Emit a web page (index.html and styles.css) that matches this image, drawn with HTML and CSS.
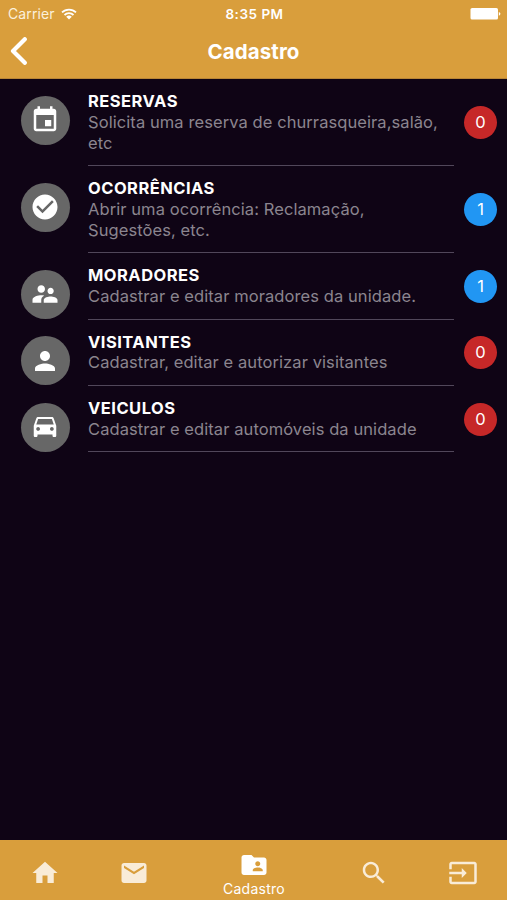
FILE: index.html
```html
<!DOCTYPE html>
<html lang="pt-BR">

<head>
    <meta charset="UTF-8">
    <meta name="viewport" content="width=device-width, initial-scale=1.0">
    <title>Cadastro</title>
    <link rel="stylesheet" href="styles.css">
</head>

<body>
    <div class="app">
        <header class="header">
            <div class="status-bar">
                <div class="carrier">
                    <span class="carrier-name">Carrier</span>
                    <svg class="wifi" viewBox="0 0 16 12">
                        <path d="M1 4.4a10 10 0 0 1 14 0M3.5 7a6.4 6.4 0 0 1 9 0" fill="none" stroke="currentColor" stroke-width="1.8" />
                        <path d="M8 11.6L5.2 8.8a4 4 0 0 1 5.6 0z" fill="currentColor" />
                    </svg>
                </div>
                <div class="time">8:35 PM</div>
                <svg class="battery" viewBox="0 0 31 12">
                    <rect x="0.5" y="0" width="27.5" height="11.6" rx="1.6" />
                    <path d="M28.8 3.9q1.6 0.4 1.6 1.9t-1.6 1.9z" />
                </svg>
            </div>
            <div class="nav-bar">
                <svg class="back" viewBox="0 0 18 28">
                    <path d="M14.8 2.2L3 14l11.8 11.8" fill="none" stroke="currentColor" stroke-width="4.2" stroke-linejoin="round" stroke-linecap="round" />
                </svg>
                <h1>Cadastro</h1>
            </div>
        </header>

        <main class="list">
            <div class="item">
                <div class="avatar">
                    <svg viewBox="0 0 24 24"><path d="M17 12h-5v5h5v-5zM16 1v2H8V1H6v2H5c-1.11 0-1.99.9-1.99 2L3 19c0 1.1.89 2 2 2h14c1.1 0 2-.9 2-2V5c0-1.1-.9-2-2-2h-1V1h-2zm3 18H5V8h14v11z" /></svg>
                </div>
                <div class="info">
                    <h2>RESERVAS</h2>
                    <p>Solicita uma reserva de churrasqueira,salão,<br>etc</p>
                </div>
                <div class="badge red">0</div>
            </div>
            <div class="item">
                <div class="avatar">
                    <svg viewBox="0 0 24 24"><path d="M12 2C6.48 2 2 6.48 2 12s4.48 10 10 10 10-4.48 10-10S17.52 2 12 2zm-2 15l-5-5 1.41-1.41L10 14.17l7.59-7.59L19 8l-9 9z" /></svg>
                </div>
                <div class="info">
                    <h2>OCORRÊNCIAS</h2>
                    <p>Abrir uma ocorrência: Reclamação,<br>Sugestões, etc.</p>
                </div>
                <div class="badge blue">1</div>
            </div>
            <div class="item">
                <div class="avatar">
                    <svg viewBox="0 0 24 24"><path d="M16.5 12c1.38 0 2.49-1.12 2.49-2.5S17.88 7 16.5 7C15.12 7 14 8.12 14 9.5s1.12 2.5 2.5 2.5zM9 11c1.66 0 2.99-1.34 2.99-3S10.66 5 9 5C7.34 5 6 6.34 6 8s1.34 3 3 3zm7.5 3c-1.83 0-5.5.92-5.5 2.75V19h11v-2.25c0-1.83-3.67-2.75-5.5-2.75zM9 13c-2.33 0-7 1.17-7 3.5V19h7v-2.25c0-.85.33-2.34 2.37-3.47C10.5 13.1 9.66 13 9 13z" /></svg>
                </div>
                <div class="info">
                    <h2>MORADORES</h2>
                    <p>Cadastrar e editar moradores da unidade.</p>
                </div>
                <div class="badge blue">1</div>
            </div>
            <div class="item">
                <div class="avatar">
                    <svg viewBox="0 0 24 24"><path d="M12 12c2.21 0 4-1.79 4-4s-1.79-4-4-4-4 1.79-4 4 1.79 4 4 4zm0 2c-2.67 0-8 1.34-8 4v2h16v-2c0-2.66-5.33-4-8-4z" /></svg>
                </div>
                <div class="info">
                    <h2>VISITANTES</h2>
                    <p>Cadastrar, editar e autorizar visitantes</p>
                </div>
                <div class="badge red">0</div>
            </div>
            <div class="item">
                <div class="avatar">
                    <svg viewBox="0 0 24 24"><path d="M18.92 5.01C18.72 4.42 18.16 4 17.5 4h-11c-.66 0-1.21.42-1.42 1.01L3 11v8c0 .55.45 1 1 1h1c.55 0 1-.45 1-1v-1h12v1c0 .55.45 1 1 1h1c.55 0 1-.45 1-1v-8l-2.08-5.99zM6.5 15c-.83 0-1.5-.67-1.5-1.5S5.67 12 6.5 12s1.5.67 1.5 1.5S7.33 15 6.5 15zm11 0c-.83 0-1.5-.67-1.5-1.5s.67-1.5 1.5-1.5 1.5.67 1.5 1.5-.67 1.5-1.5 1.5zM5 10l1.5-4.5h11L19 10H5z" /></svg>
                </div>
                <div class="info">
                    <h2>VEICULOS</h2>
                    <p>Cadastrar e editar automóveis da unidade</p>
                </div>
                <div class="badge red">0</div>
            </div>
        </main>

        <nav class="tabs">
            <div class="tab">
                <svg viewBox="0 0 24 24"><path d="M10 20v-6h4v6h5v-8h3L12 3 2 12h3v8z" /></svg>
            </div>
            <div class="tab">
                <svg viewBox="0 0 24 24"><path d="M20 4H4c-1.1 0-1.99.9-1.99 2L2 18c0 1.1.9 2 2 2h16c1.1 0 2-.9 2-2V6c0-1.1-.9-2-2-2zm0 4l-8 5-8-5V6l8 5 8-5v2z" /></svg>
            </div>
            <div class="tab active">
                <svg viewBox="0 0 24 24"><path d="M20 6h-8l-2-2H4c-1.1 0-1.99.9-1.99 2L2 18c0 1.1.9 2 2 2h16c1.1 0 2-.9 2-2V8c0-1.1-.9-2-2-2zm-5 3c1.1 0 2 .9 2 2s-.9 2-2 2-2-.9-2-2 .9-2 2-2zm4 8h-8v-1c0-1.33 2.67-2 4-2s4 .67 4 2v1z" /></svg>
                <span>Cadastro</span>
            </div>
            <div class="tab">
                <svg viewBox="0 0 24 24"><path d="M15.5 14h-.79l-.28-.27C15.41 12.59 16 11.11 16 9.5 16 5.91 13.09 3 9.5 3S3 5.91 3 9.5 5.91 16 9.5 16c1.61 0 3.09-.59 4.23-1.57l.27.28v.79l5 4.99L20.49 19l-4.99-5zm-6 0C7.01 14 5 11.99 5 9.5S7.01 5 9.5 5 14 7.01 14 9.5 11.99 14 9.5 14z" /></svg>
            </div>
            <div class="tab">
                <svg viewBox="0 0 24 24"><path d="M21 3.01H3c-1.1 0-2 .9-2 2V9h2V4.99h18v14.03H3V15H1v4.01c0 1.1.9 1.98 2 1.98h18c1.1 0 2-.88 2-1.98v-14c0-1.11-.9-2-2-2zM11 16l4-4-4-4v3H1v2h10v3z" /></svg>
            </div>
        </nav>
    </div>
</body>

</html>
```
FILE: styles.css
```css
body {
    margin: 0;
    font-family: 'Inter', sans-serif;
    color: #fff;
}

.app {
    display: flex;
    flex-direction: column;
    height: 900px;
    background: #0f0415;
    overflow: hidden;
}

.header {
    height: 79px;
    background: #d99e3c;
    box-sizing: border-box;
    border-bottom: 1px solid #b98637;
}

.status-bar {
    display: grid;
    grid-template-columns: 1fr auto 1fr;
    align-items: center;
    height: 27px;
    padding: 0 6px 0 8px;
}

.carrier {
    display: flex;
    align-items: center;
    gap: 6px;
    font-size: 14px;
    letter-spacing: 0.1px;
    color: #fbf0dc;
}

.wifi {
    width: 16px;
    height: 12px;
    color: #fff;
}

.time {
    font-size: 13.5px;
    font-weight: 600;
    letter-spacing: 0.5px;
}

.battery {
    justify-self: end;
    width: 31px;
    height: 12px;
    fill: #fff;
}

.nav-bar {
    display: grid;
    grid-template-columns: 18px 1fr 18px;
    align-items: center;
    height: 48px;
    padding: 0 10px;
}

.back {
    width: 18px;
    height: 28px;
}

h1 {
    margin: 0;
    text-align: center;
    font-size: 20.5px;
    font-weight: 700;
    letter-spacing: 0.1px;
}

.list {
    flex: 1;
}

.item {
    display: flex;
    align-items: center;
    padding: 0 10px 0 20.5px;
}

.avatar {
    display: flex;
    align-items: center;
    justify-content: center;
    align-self: flex-start;
    width: 49px;
    height: 49px;
    margin: 16.7px 18.5px 0 0;
    border-radius: 50%;
    background: #676767;
}

.avatar svg {
    width: 30px;
    height: 30px;
    fill: #fff;
}

.info {
    width: 366px;
    padding: 12.2px 0 11.8px;
    border-bottom: 1px solid #51475a;
}

h2,
p {
    margin: 0;
    line-height: 20.7px;
    white-space: nowrap;
}

h2 {
    font-size: 16.5px;
    font-weight: 700;
    letter-spacing: 0.48px;
}

p {
    font-size: 16.5px;
    letter-spacing: 0.08px;
    color: #8b858f;
}

.badge {
    width: 33px;
    height: 33px;
    margin-left: auto;
    border-radius: 50%;
    font-size: 16.5px;
    line-height: 33px;
    text-align: center;
}

.red {
    background: #c62828;
}

.blue {
    background: #2196f3;
}

.tabs {
    display: flex;
    height: 60px;
    padding-left: 1px;
    background: #d99e3c;
}

.tab {
    display: flex;
    flex-direction: column;
    align-items: center;
    width: 88.7px;
    padding-top: 18px;
    box-sizing: border-box;
    color: #f9ecd8;
}

.tab svg {
    width: 30px;
    height: 30px;
    fill: currentColor;
}

.tab.active {
    flex: 1;
    padding-top: 10px;
    color: #fff;
}

.tab span {
    font-size: 14px;
    line-height: 17px;
    letter-spacing: 0.25px;
}
```
